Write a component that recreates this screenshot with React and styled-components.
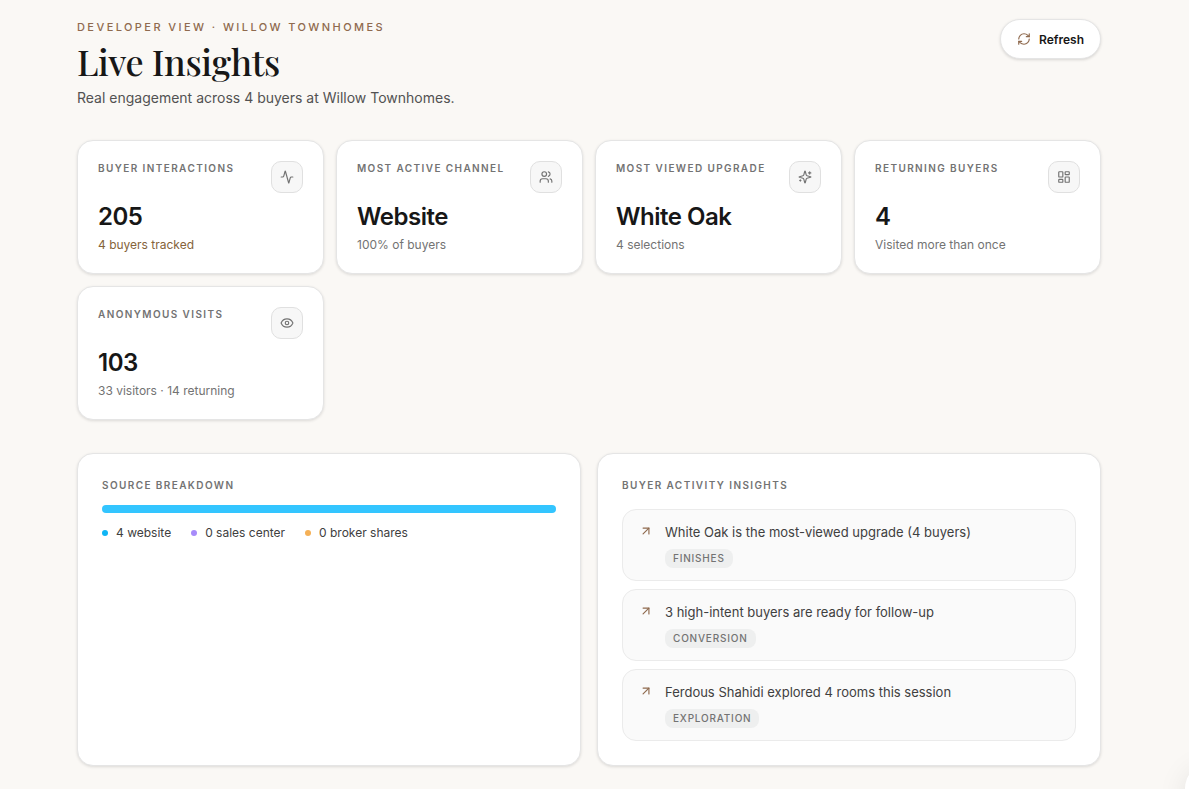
import React from 'react';
import styled, { createGlobalStyle } from 'styled-components';
import {
  Activity,
  ArrowUpRight,
  Eye,
  LayoutDashboard,
  RefreshCw,
  Users,
} from 'lucide-react';

const colors = {
  page: '#faf8f5',
  card: '#ffffff',
  border: '#e5e5e5',
  ink: '#171717',
  text: '#404040',
  subtle: '#525252',
  muted: '#737373',
  brown: '#8f6a4e',
  gold: '#85633a',
};

// Sparkles with a small plus on each side
const SparklesIcon = ({ size }) => (
  <svg
    width={size}
    height={size}
    viewBox="0 0 24 24"
    fill="none"
    stroke="currentColor"
    strokeWidth="2"
    strokeLinecap="round"
    strokeLinejoin="round"
  >
    <path d="M9.937 15.5A2 2 0 0 0 8.5 14.063l-6.135-1.582a.5.5 0 0 1 0-.962L8.5 9.936A2 2 0 0 0 9.937 8.5l1.582-6.135a.5.5 0 0 1 .963 0L14.063 8.5A2 2 0 0 0 15.5 9.937l6.135 1.581a.5.5 0 0 1 0 .964L15.5 14.063a2 2 0 0 0-1.437 1.437l-1.582 6.135a.5.5 0 0 1-.963 0z" />
    <path d="M20 3v4" />
    <path d="M22 5h-4" />
    <path d="M4 17v2" />
    <path d="M5 18H3" />
  </svg>
);

const stats = [
  {
    label: 'Buyer interactions',
    value: '205',
    note: '4 buyers tracked',
    Icon: Activity,
    highlight: true,
  },
  { label: 'Most active channel', value: 'Website', note: '100% of buyers', Icon: Users },
  { label: 'Most viewed upgrade', value: 'White Oak', note: '4 selections', Icon: SparklesIcon },
  { label: 'Returning buyers', value: '4', note: 'Visited more than once', Icon: LayoutDashboard },
  { label: 'Anonymous visits', value: '103', note: '33 visitors · 14 returning', Icon: Eye },
];

const sources = [
  { name: 'website', count: 4, dot: '#0fb5f5', bar: '#33c5ff' },
  { name: 'sales center', count: 0, dot: '#a78bfa', bar: '#a78bfa' },
  { name: 'broker shares', count: 0, dot: '#f5b056', bar: '#f5b056' },
];

const insights = [
  { text: 'White Oak is the most-viewed upgrade (4 buyers)', tag: 'Finishes' },
  { text: '3 high-intent buyers are ready for follow-up', tag: 'Conversion' },
  { text: 'Ferdous Shahidi explored 4 rooms this session', tag: 'Exploration' },
];

const GlobalStyle = createGlobalStyle`
  *,
  *::before,
  *::after {
    box-sizing: border-box;
  }

  body {
    margin: 0;
    background: ${colors.page};
    color: ${colors.ink};
    font-family: Inter, 'Liberation Sans', sans-serif;
  }

  h1, h2, p, ul {
    margin: 0;
    padding: 0;
  }

  ul {
    list-style: none;
  }
`;

const PageMain = styled.main`
  padding: 19px 88px 23px 77px;
`;

const ContentDiv = styled.div`
  max-width: 1152px;
  margin: 0 auto;
`;

const PageHeader = styled.header`
  display: flex;
  align-items: flex-start;
  justify-content: space-between;
  gap: 24px;
  margin-bottom: 32px;
`;

const EyebrowP = styled.p`
  font-size: 11px;
  line-height: 16px;
  font-weight: 500;
  letter-spacing: 0.22em;
  text-transform: uppercase;
  color: ${colors.brown};
`;

const PageTitle = styled.h1`
  margin: 4px 0;
  font-family: 'Playfair Display', 'Liberation Serif', serif;
  font-size: 36px;
  line-height: 45px;
  font-weight: 500;
  letter-spacing: -0.01em;
`;

const SubtitleP = styled.p`
  font-size: 14px;
  line-height: 20px;
  color: ${colors.subtle};
`;

const RefreshButton = styled.button`
  display: inline-flex;
  align-items: center;
  gap: 8px;
  height: 40px;
  padding: 0 16px;
  border: 1px solid ${colors.border};
  border-radius: 20px;
  background: ${colors.card};
  box-shadow: 0 1px 3px rgba(0, 0, 0, 0.14);
  color: ${colors.ink};
  font-family: inherit;
  font-size: 12px;
  font-weight: 600;
  cursor: pointer;

  svg {
    color: ${colors.brown};
  }
`;

const StatsSection = styled.section`
  display: grid;
  grid-template-columns: repeat(4, minmax(0, 1fr));
  gap: 12px;
  margin-bottom: 33px;
`;

const Card = styled.article`
  padding: ${props => (props.$wide ? '24px' : '20px')};
  border: 1px solid ${colors.border};
  border-radius: 16px;
  background: ${colors.card};
  box-shadow: 0 1px 3px rgba(0, 0, 0, 0.12);
`;

const CardTop = styled.div`
  display: flex;
  align-items: flex-start;
  justify-content: space-between;
  margin-bottom: 8px;
`;

const LabelHeading = styled.h2`
  font-size: 10px;
  line-height: 15px;
  font-weight: 600;
  letter-spacing: 0.14em;
  text-transform: uppercase;
  color: ${colors.muted};
`;

const IconBox = styled.span`
  display: flex;
  align-items: center;
  justify-content: center;
  flex: none;
  width: 32px;
  height: 32px;
  border: 1px solid #e0e0e0;
  border-radius: 10px;
  background: #f7f7f7;
  color: ${colors.muted};
`;

const ValueP = styled.p`
  margin-bottom: 4px;
  font-size: 24px;
  line-height: 32px;
  font-weight: 600;
  letter-spacing: -0.02em;
`;

const NoteP = styled.p`
  font-size: 12px;
  line-height: 16px;
  color: ${props => (props.$highlight ? colors.gold : colors.muted)};
`;

const PanelsSection = styled.section`
  display: grid;
  grid-template-columns: repeat(2, minmax(0, 1fr));
  gap: 16px;
`;

const BarDiv = styled.div`
  display: flex;
  height: 8px;
  margin: 12px 0;
  border-radius: 4px;
  overflow: hidden;
  background: #f5f5f5;
`;

const BarPart = styled.span`
  flex: ${props => props.$count} 0 0;
  background: ${props => props.$color};
`;

const LegendUl = styled.ul`
  display: flex;
  flex-wrap: wrap;
  gap: 8px 20px;
`;

const LegendLi = styled.li`
  display: flex;
  align-items: center;
  gap: 8px;
  font-size: 12px;
  line-height: 16px;
  color: ${colors.text};

  &::before {
    content: '';
    width: 6px;
    height: 6px;
    border-radius: 50%;
    background: ${props => props.$color};
  }
`;

const InsightsUl = styled.ul`
  display: flex;
  flex-direction: column;
  gap: 8px;
  margin-top: 16px;
`;

const InsightLi = styled.li`
  display: flex;
  align-items: flex-start;
  gap: 12px;
  padding: 12px 16px;
  border: 1px solid #ebebeb;
  border-radius: 14px;
  background: #fafafa;

  svg {
    flex: none;
    margin-top: 2px;
    color: ${colors.brown};
  }
`;

const InsightP = styled.p`
  margin-bottom: 6px;
  font-size: 13px;
  line-height: 21px;
  color: ${colors.text};
`;

const TagSpan = styled.span`
  display: block;
  width: fit-content;
  padding: 2px 8px;
  border-radius: 8px;
  background: #eeefef;
  font-size: 10px;
  line-height: 15px;
  font-weight: 500;
  letter-spacing: 0.08em;
  text-transform: uppercase;
  color: ${colors.muted};
`;

// Mostly tucked away outside the corner of the window
const CornerButton = styled.button`
  position: fixed;
  right: -52px;
  bottom: -28px;
  width: 56px;
  height: 56px;
  border: 0;
  border-radius: 50%;
  background: ${colors.card};
  box-shadow: 0 8px 30px rgba(0, 0, 0, 0.1);
`;

function renderStat({ label, value, note, Icon, highlight }) {
  return (
    <Card key={label}>
      <CardTop>
        <LabelHeading>{label}</LabelHeading>
        <IconBox>
          <Icon size={14} />
        </IconBox>
      </CardTop>
      <ValueP>{value}</ValueP>
      <NoteP $highlight={highlight}>{note}</NoteP>
    </Card>
  );
}

function renderInsight({ text, tag }) {
  return (
    <InsightLi key={tag}>
      <ArrowUpRight size={14} />
      <div>
        <InsightP>{text}</InsightP>
        <TagSpan>{tag}</TagSpan>
      </div>
    </InsightLi>
  );
}

const App = () => {
  return (
    <PageMain>
      <GlobalStyle />
      <ContentDiv>
        <PageHeader>
          <div>
            <EyebrowP>Developer view · Willow Townhomes</EyebrowP>
            <PageTitle>Live Insights</PageTitle>
            <SubtitleP>Real engagement across 4 buyers at Willow Townhomes.</SubtitleP>
          </div>
          <RefreshButton type="button">
            <RefreshCw size={14} />
            Refresh
          </RefreshButton>
        </PageHeader>

        <StatsSection>{stats.map(renderStat)}</StatsSection>

        <PanelsSection>
          <Card $wide>
            <LabelHeading>Source breakdown</LabelHeading>
            <BarDiv>
              {sources.map(source => (
                <BarPart key={source.name} $count={source.count} $color={source.bar} />
              ))}
            </BarDiv>
            <LegendUl>
              {sources.map(source => (
                <LegendLi key={source.name} $color={source.dot}>
                  {source.count} {source.name}
                </LegendLi>
              ))}
            </LegendUl>
          </Card>
          <Card $wide>
            <LabelHeading>Buyer activity insights</LabelHeading>
            <InsightsUl>{insights.map(renderInsight)}</InsightsUl>
          </Card>
        </PanelsSection>
      </ContentDiv>
      <CornerButton type="button" aria-label="Open assistant" />
    </PageMain>
  );
};

export default App;
